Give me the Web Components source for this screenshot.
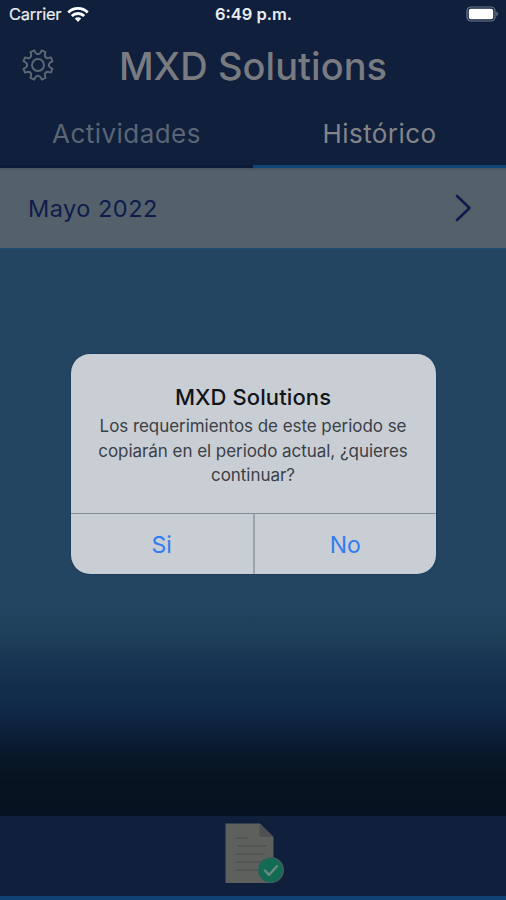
<!DOCTYPE html>
<html lang="es">
<head>
<meta charset="utf-8">
<title>MXD Solutions</title>
<style>
    body {
        margin: 0;
        font-family: Inter, "Liberation Sans", sans-serif;
    }
</style>
</head>
<body>
<app-screen>
    <status-bar slot="header" carrier="Carrier" time="6:49 p.m."></status-bar>
    <title-bar slot="header">MXD Solutions</title-bar>
    <tab-bar slot="header">
        <tab-item style="--spacing: 0.45px">Actividades</tab-item>
        <tab-item active style="--spacing: 0.42px">Histórico</tab-item>
    </tab-bar>
    <period-row>Mayo 2022</period-row>
    <bottom-bar slot="footer"></bottom-bar>
    <alert-dialog slot="overlay" heading="MXD Solutions">
        Los requerimientos de este periodo se<br>copiarán en el periodo actual, ¿quieres<br>continuar?
        <span slot="cancel">Si</span>
        <span slot="accept">No</span>
    </alert-dialog>
</app-screen>

<script>
class AppScreen extends HTMLElement {
    constructor() {
        super();
        this.attachShadow({mode: 'open'});
        this.shadowRoot.innerHTML = /*html*/`
        <style>
        :host {
            position: relative;
            display: flex;
            flex-direction: column;
            width: 506px;
            height: 900px;
            overflow: hidden;
            background: #0f1f3c;
        }
        main {
            flex: 1;
            background: linear-gradient(#244562 0, #244562 430px, #1f4059 465px, #153150 505px, #102948 542px, #0b1e38 568px, #081728 590px, #06131f 615px, #051120 100%);
        }
        .overlay {
            position: absolute;
            inset: 354px 0 auto;
            display: flex;
            justify-content: center;
        }
        </style>
        <header><slot name="header"></slot></header>
        <main><slot></slot></main>
        <slot name="footer"></slot>
        <div class="overlay"><slot name="overlay"></slot></div>
        `;
    }
}

class StatusBar extends HTMLElement {
    static get observedAttributes() {
        return ['carrier', 'time'];
    }

    constructor() {
        super();
        this.attachShadow({mode: 'open'});
        this.shadowRoot.innerHTML = /*html*/`
        <style>
        :host {
            display: grid;
            grid-template-columns: 1fr auto 1fr;
            align-items: center;
            height: 28px;
            padding: 0 6px 0 9px;
            color: #e9ecf1;
            font-size: 16.5px;
        }
        .left {
            display: flex;
            align-items: center;
            gap: 6px;
        }
        .carrier {
            letter-spacing: -0.25px;
            -webkit-text-stroke: 0.2px;
        }
        .time {
            margin-right: 2px;
            font-weight: 600;
        }
        .battery {
            justify-self: end;
        }
        svg {
            display: block;
        }
        </style>
        <div class="left">
            <span class="carrier"></span>
            <svg width="22" height="17" viewBox="0 0 22 17" fill="none" stroke="#fff" stroke-width="2.9">
                <path d="M1.3 6.4a13.7 13.7 0 0 1 19.4 0"/>
                <path d="M4.8 10a8.8 8.8 0 0 1 12.4 0"/>
                <path d="M11 15.9 7.8 12.6a4.6 4.6 0 0 1 6.4 0z" fill="#fff" stroke="none"/>
            </svg>
        </div>
        <span class="time"></span>
        <svg class="battery" width="34" height="16" viewBox="0 0 34 16">
            <rect x="1" y="1" width="28" height="14" rx="4" fill="none" stroke="#6f7a8c" stroke-width="1.2"/>
            <rect x="2.8" y="2.700" width="24.400" height="10.600" rx="2" fill="#fff"/>
            <path d="M30.400 5.300q3 2.700 0 5.400z" fill="#6f7a8c"/>
        </svg>
        `;
    }

    attributeChangedCallback(name, oldValue, newValue) {
        this.shadowRoot.querySelector('.' + name).textContent = newValue;
    }
}

class GearIcon extends HTMLElement {
    constructor() {
        super();
        this.attachShadow({mode: 'open'});
        this.shadowRoot.innerHTML = /*html*/`
        <style>
        :host {
            display: block;
            width: 34px;
            height: 34px;
        }
        svg {
            display: block;
        }
        </style>
        <svg width="34" height="34" viewBox="-17 -17 34 34" fill="none" stroke="#5e6874" stroke-width="1.9" stroke-linejoin="round">
            <circle r="6"/>
            <path d="${this.outline()}"/>
        </svg>
        `;
    }

    // eight teeth, half a step off the vertical, with a rounded valley between each pair
    outline() {
        const at = (degrees, radius) => {
            const angle = degrees * Math.PI / 180;
            return (radius * Math.cos(angle)).toFixed(2) + ' ' + (radius * Math.sin(angle)).toFixed(2);
        };
        let path = 'M' + at(22.5 - 8, 15);
        for (let i = 0; i < 8; i++) {
            const mid = i * 45 + 22.5;
            path += 'L' + at(mid + 8, 15) + 'L' + at(mid + 11, 12.3);
            path += 'Q' + at(mid + 22.5, 9.6) + ' ' + at(mid + 34, 12.3) + 'L' + at(mid + 37, 15);
        }
        return path + 'Z';
    }
}

class TitleBar extends HTMLElement {
    constructor() {
        super();
        this.attachShadow({mode: 'open'});
        this.shadowRoot.innerHTML = /*html*/`
        <style>
        :host {
            display: grid;
            grid-template-columns: 62px 1fr 62px;
            align-items: center;
            height: 76px;
            color: #797b80;
        }
        gear-icon {
            margin-left: 21px;
            margin-top: -2px;
        }
        h1 {
            margin: 0;
            text-align: center;
            font-size: 38px;
            font-weight: 500;
            letter-spacing: 0.05px;
            white-space: nowrap;
        }
        </style>
        <gear-icon></gear-icon>
        <h1><slot></slot></h1>
        `;
    }
}

class TabBar extends HTMLElement {
    constructor() {
        super();
        this.attachShadow({mode: 'open'});
        this.shadowRoot.innerHTML = /*html*/`
        <style>
        :host {
            display: grid;
            grid-template-columns: 1fr 1fr;
            height: 64px;
        }
        </style>
        <slot></slot>
        `;
    }
}

class TabItem extends HTMLElement {
    constructor() {
        super();
        this.attachShadow({mode: 'open'});
        this.shadowRoot.innerHTML = /*html*/`
        <style>
        :host {
            display: flex;
            align-items: center;
            justify-content: center;
            box-sizing: border-box;
            padding-bottom: 2px;
            border-bottom: 3px solid #0b1a39;
            color: #5b6575;
            font-size: 26px;
            letter-spacing: var(--spacing, 0);
        }
        :host([active]) {
            border-bottom-color: #0f4675;
            color: #858589;
        }
        </style>
        <slot></slot>
        `;
    }
}

class PeriodRow extends HTMLElement {
    constructor() {
        super();
        this.attachShadow({mode: 'open'});
        this.shadowRoot.innerHTML = /*html*/`
        <style>
        :host {
            display: flex;
            align-items: center;
            justify-content: space-between;
            box-sizing: border-box;
            height: 81px;
            padding: 0 34px 0 28px;
            border-bottom: 1px solid #1d4a76;
            background: linear-gradient(#47545f, #54616b 3px);
            color: #0e1c4c;
            font-size: 23.500px;
            letter-spacing: 0.5px;
        }
        svg {
            display: block;
        }
        </style>
        <span><slot></slot></span>
        <svg width="18" height="28" viewBox="0 0 18 28" fill="none" stroke="#0e1c4c" stroke-width="2.6" stroke-linecap="round" stroke-linejoin="round">
            <path d="M3 2 15.500 14 3 26"/>
        </svg>
        `;
    }
}

class BottomBar extends HTMLElement {
    constructor() {
        super();
        this.attachShadow({mode: 'open'});
        this.shadowRoot.innerHTML = /*html*/`
        <style>
        :host {
            display: flex;
            justify-content: center;
            box-sizing: border-box;
            height: 84px;
            padding-top: 5px;
            border-bottom: 4px solid #104275;
            background: #0f1f3c;
        }
        svg {
            display: block;
        }
        </style>
        <svg width="62" height="64" viewBox="0 0 62 64">
            <path d="M3.500 2.500H38L51.500 16V62H3.500z" fill="#5e605d"/>
            <path d="M37.500 2.500V16H51.500z" fill="#4f5050"/>
            <path d="M14.500 17H25M17 25H43M14.500 33H42M14.500 41H38M14.500 49H35" stroke="#525553" stroke-width="2" stroke-linecap="round"/>
            <circle cx="49" cy="49" r="13" fill="#465b5d"/>
            <circle cx="48.500" cy="49" r="12" fill="#126b52"/>
            <path d="m43 49.500 4 4.500 8-9" fill="none" stroke="#6e8b82" stroke-width="2.200" stroke-linecap="round" stroke-linejoin="round"/>
        </svg>
        `;
    }
}

class AlertDialog extends HTMLElement {
    static get observedAttributes() {
        return ['heading'];
    }

    constructor() {
        super();
        this.attachShadow({mode: 'open'});
        this.shadowRoot.innerHTML = /*html*/`
        <style>
        :host {
            display: flex;
            flex-direction: column;
            box-sizing: border-box;
            width: 365px;
            height: 220px;
            border-radius: 19px;
            background: #c9ced5;
            box-shadow: 0 0 2px #083452;
            overflow: hidden;
            text-align: center;
        }
        .body {
            flex: 1;
            padding-top: 28px;
        }
        h2 {
            margin: 0;
            color: #111519;
            font-size: 22px;
            font-weight: 500;
            line-height: 30px;
            letter-spacing: 0.1px;
        }
        p {
            margin: 2px 0 0;
            color: #3b4046;
            font-size: 17px;
            line-height: 24.500px;
            letter-spacing: -0.05px;
            white-space: nowrap;
        }
        .actions {
            display: grid;
            grid-template-columns: 1fr 1fr;
            height: 60px;
            border-top: 1px solid #878d97;
        }
        .actions div {
            display: flex;
            align-items: center;
            justify-content: center;
            padding-top: 2px;
            color: #2f7df0;
            font-size: 23px;
        }
        .actions div + div {
            border-left: 2px solid #9da4ae;
        }
        </style>
        <div class="body">
            <h2></h2>
            <p><slot></slot></p>
        </div>
        <div class="actions">
            <div><slot name="cancel"></slot></div>
            <div><slot name="accept"></slot></div>
        </div>
        `;
    }

    attributeChangedCallback(name, oldValue, newValue) {
        this.shadowRoot.querySelector('h2').textContent = newValue;
    }
}

customElements.define('app-screen', AppScreen);
customElements.define('status-bar', StatusBar);
customElements.define('gear-icon', GearIcon);
customElements.define('title-bar', TitleBar);
customElements.define('tab-bar', TabBar);
customElements.define('tab-item', TabItem);
customElements.define('period-row', PeriodRow);
customElements.define('bottom-bar', BottomBar);
customElements.define('alert-dialog', AlertDialog);
</script>
</body>
</html>
